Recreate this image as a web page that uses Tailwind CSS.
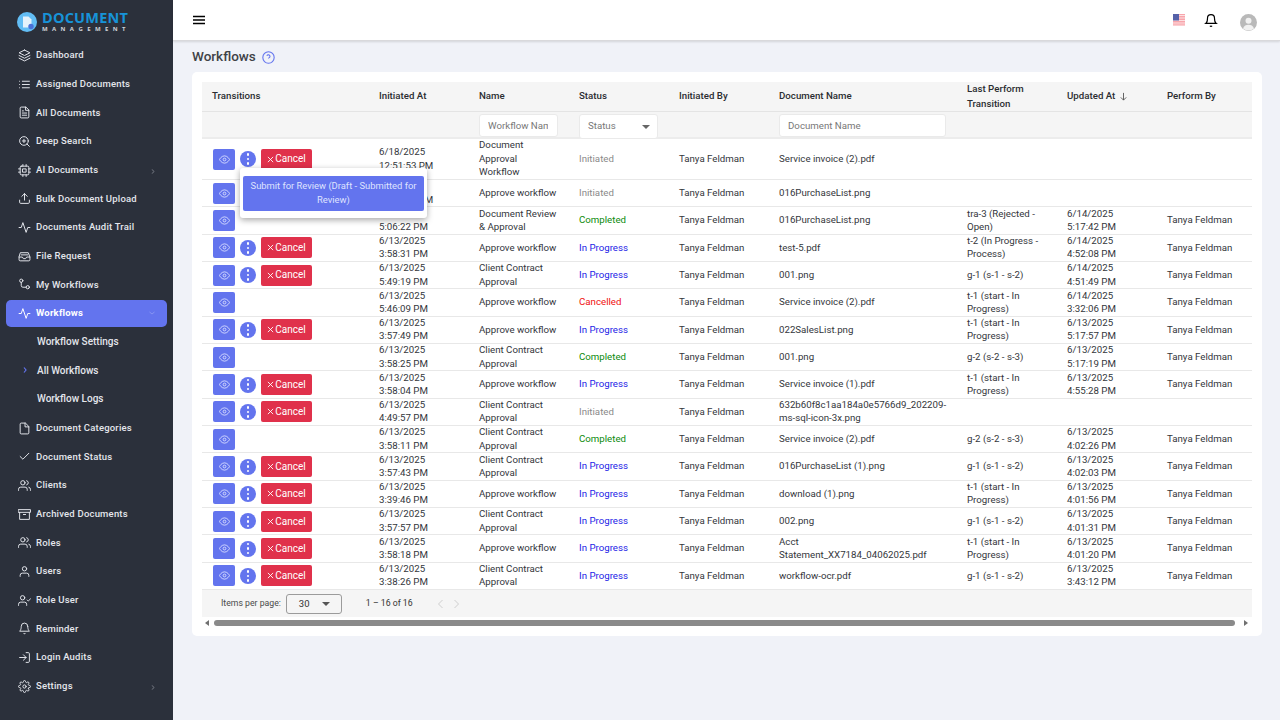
<!DOCTYPE html>
<html lang="en">
<head>
    <meta charset="UTF-8">
    <title>Workflows - Document Management</title>
    <script src="https://cdn.jsdelivr.net/npm/@tailwindcss/browser@4"></script>
</head>
<body class="bg-[#f0f2f8] h-screen overflow-hidden font-['Roboto',sans-serif]">
<div class="flex h-[720px]">
    <!-- Sidebar -->
    <aside class="w-[173px] shrink-0 bg-[#2b303b] text-[#e4e6ec]">
        <div class="flex items-center h-[41px] pl-[17px] pt-[3px]">
            <svg class="w-[20px] h-[20px] shrink-0" viewBox="0 0 20 20"><circle cx="10" cy="10" r="10" fill="#62bdf5"/><path d="M6 4.500h5.500L14.500 7.500V15.500H6z" fill="#e6f2fb"/><circle cx="14" cy="14.500" r="2.700" fill="#4a72d8"/></svg>
            <div class="ml-[5px] leading-none">
                <div class="text-[14.500px] font-bold text-[#1793d8] tracking-[0.2px] leading-[14px] font-['Open_Sans',sans-serif]">DOCUMENT</div>
                <div class="text-[6px] font-bold text-[#cfd2d8] tracking-[4.400px] leading-[8px] font-['Open_Sans',sans-serif]">MANAGEMENT</div>
            </div>
        </div>
        <nav id="nav"></nav>
    </aside>

    <main class="flex-1 min-w-0">
        <header class="h-[41px] bg-white border-b border-[#d9d9dc] shadow-[0_1px_2px_rgba(0,0,0,0.12)] flex items-center pl-[20px] pr-[23px]">
            <svg class="w-[12px] h-[12px] text-black" viewBox="0 0 12 12" fill="none" stroke="currentColor" stroke-width="1.300"><path d="M0 2.500h12M0 6h12M0 9.500h12"/></svg>
            <div class="ml-auto flex items-center">
                <svg class="w-[12px] h-[12px]" viewBox="0 0 12 12"><rect width="12" height="12" fill="#f8a5ab"/><path d="M0 1.500h12M0 4h12M0 6.500h12M0 9h12M0 11.200h12" stroke="#fde0e2" stroke-width="1"/><rect width="6" height="6.500" fill="#5561a8"/></svg>
                <svg class="w-[14px] h-[15px] ml-[19px] text-black" viewBox="0 0 24 24" fill="none" stroke="currentColor" stroke-width="2"><path d="M18 8A6 6 0 0 0 6 8c0 7-3 9-3 9h18s-3-2-3-9"/><path d="M13.730 21a2 2 0 0 1-3.460 0"/></svg>
                <svg class="w-[17px] h-[17px] ml-[22px] mt-[4px]" viewBox="0 0 17 17"><circle cx="8.500" cy="8.500" r="8.500" fill="#b9b9b9"/><circle cx="8.500" cy="6.700" r="3" fill="#f1f1f1"/><path d="M3 14.500c1-3 3-3.800 5.500-3.800s4.500.8 5.500 3.800a8.500 8.500 0 0 1-11 0z" fill="#f1f1f1"/></svg>
            </div>
        </header>

        <div class="pl-[19px] pr-[18px]">
            <div class="h-[31px] flex items-center pt-[1px]">
                <h1 class="text-[13.500px] font-medium text-[#3f4247] leading-none">Workflows</h1>
                <svg class="w-[13px] h-[13px] ml-[6px] mt-[1px] text-[#6374ee]" viewBox="0 0 24 24" fill="none" stroke="currentColor" stroke-width="2"><circle cx="12" cy="12" r="10.500"/><path d="M9 9a3 3 0 0 1 5.800 1c0 2-2.800 2.500-2.800 4"/><path d="M12 17.500h.01"/></svg>
            </div>

            <!-- Card -->
            <section class="relative h-[564px] bg-white rounded-[5px] px-[10px] pt-[10px] text-[9.700px] text-[#33363b]">
                <!-- Header -->
                <div class="grid grid-cols-[167px_100px_100px_100px_100px_188px_100px_100px_95px] items-center h-[30px] bg-[#f5f5f5] border-b border-[#e4e4e4] font-medium text-[#2b2d31] leading-[14.500px] pl-[10px]">
                    <div>Transitions</div><div>Initiated At</div><div>Name</div><div>Status</div><div>Initiated By</div><div>Document Name</div>
                    <div>Last Perform<br>Transition</div>
                    <div class="flex items-center">Updated At<svg class="w-[9px] h-[9px] ml-[4px] text-[#555]" viewBox="0 0 10 10" fill="none" stroke="currentColor" stroke-width="1"><path d="M5 1v8M2 6l3 3 3-3"/></svg></div>
                    <div>Perform By</div>
                </div>
                <!-- Filters -->
                <div class="grid grid-cols-[167px_100px_100px_100px_100px_188px_100px_100px_95px] items-center h-[27px] bg-[#f5f5f5] border-b-2 border-[#ececec] pl-[10px] text-[#777]">
                    <div></div><div></div>
                    <input placeholder="Workflow Name" class="w-[79px] h-[23px] bg-white border border-[#eaeaea] rounded-[3px] pl-[8px] pr-[9px] placeholder:text-[#777] outline-none">
                    <div class="w-[79px] h-[25px] mt-[2px] bg-white border border-[#eaeaea] rounded-[3px] flex items-center justify-between pl-[8px] pr-[7px]">Status<span class="w-0 h-0 border-x-[4px] border-x-transparent border-t-[4px] border-t-[#666]"></span></div>
                    <div></div>
                    <input placeholder="Document Name" class="w-[167px] h-[23px] bg-white border border-[#eaeaea] rounded-[3px] pl-[8px] placeholder:text-[#777] outline-none">
                    <div></div><div></div><div></div>
                </div>
                <!-- Rows -->
                <div id="rows"></div>
                <!-- Paginator -->
                <div class="flex items-center h-[27px] bg-[#f5f5f5] text-[8.700px] text-[#4a4a4a]">
                    <span class="ml-[19px]">Items per page:</span>
                    <div class="ml-[5px] w-[56px] h-[20px] border border-[#9b9b9b] rounded-[3px] flex items-center pl-[12px] pr-[11px] justify-between text-[9.500px] text-[#333]">30<span class="w-0 h-0 border-x-[4px] border-x-transparent border-t-[4px] border-t-[#555]"></span></div>
                    <span class="ml-[24px] text-[#333]">1 – 16 of 16</span>
                    <svg class="w-[7px] h-[10px] ml-[24px] text-[#cfcfcf]" viewBox="0 0 7 10" fill="none" stroke="currentColor" stroke-width="1"><path d="M5.500 1 1.500 5l4 4"/></svg>
                    <svg class="w-[7px] h-[10px] ml-[9px] text-[#cfcfcf]" viewBox="0 0 7 10" fill="none" stroke="currentColor" stroke-width="1"><path d="M1.500 1l4 4-4 4"/></svg>
                </div>
                <!-- Horizontal scrollbar -->
                <div class="flex items-center h-[10px] pt-[1px]">
                    <span class="ml-[3px] w-0 h-0 border-y-[3px] border-y-transparent border-r-[4px] border-r-[#707070]"></span>
                    <div class="ml-[5px] w-[1021px] h-[6px] rounded-full bg-[#8a8a8a]"></div>
                    <span class="ml-[9px] w-0 h-0 border-y-[3px] border-y-transparent border-l-[4px] border-l-[#707070]"></span>
                </div>

                <!-- Open action menu -->
                <div class="absolute left-[48px] top-[96px] w-[187px] h-[50px] bg-white rounded-[3px] shadow-[0_2px_6px_rgba(0,0,0,0.35)] flex items-center justify-center">
                    <button class="w-[181px] h-[35px] bg-[#6374ee] rounded-[2px] text-[9.400px] leading-[14px] text-[#dfe3ff] px-[2px]">Submit for Review (Draft - Submitted for Review)</button>
                </div>
            </section>
        </div>
    </main>
</div>

<script>
// Sidebar
const icons = {
    layers: '<path d="M12 2 2 7l10 5 10-5-10-5z"/><path d="m2 12 10 5 10-5"/><path d="m2 17 10 5 10-5"/>',
    list: '<path d="M8 6h13M8 12h13M8 18h13M3 6h.01M3 12h.01M3 18h.01"/>',
    doc: '<path d="M14 2H6a2 2 0 0 0-2 2v16a2 2 0 0 0 2 2h12a2 2 0 0 0 2-2V8z"/><path d="M14 2v6h6M16 13H8M16 17H8M10 9H8"/>',
    search: '<circle cx="11" cy="11" r="8"/><path d="m21 21-4.350-4.350M11 8v6M8 11h6"/>',
    cpu: '<rect x="4" y="4" width="16" height="16" rx="2"/><rect x="9" y="9" width="6" height="6"/><path d="M9 1v3M15 1v3M9 20v3M15 20v3M20 9h3M20 15h3M1 9h3M1 15h3"/>',
    upload: '<path d="M21 15v4a2 2 0 0 1-2 2H5a2 2 0 0 1-2-2v-4"/><path d="m17 8-5-5-5 5M12 3v12"/>',
    activity: '<path d="M22 12h-4l-3 9L9 3l-3 9H2"/>',
    inbox: '<path d="M22 13h-6l-2 3h-4l-2-3H2"/><path d="M5 5h14l3 8v5a2 2 0 0 1-2 2H4a2 2 0 0 1-2-2v-5z"/><path d="M6 9h12"/>',
    flow: '<circle cx="6" cy="5" r="3"/><circle cx="18" cy="17" r="3"/><path d="M6 8v6a3 3 0 0 0 3 3h6"/>',
    file: '<path d="M13 2H6a2 2 0 0 0-2 2v16a2 2 0 0 0 2 2h12a2 2 0 0 0 2-2V9z"/><path d="M13 2v7h7"/>',
    check: '<path d="M20 6 9 17l-5-5"/>',
    users: '<path d="M17 21v-2a4 4 0 0 0-4-4H5a4 4 0 0 0-4 4v2"/><circle cx="9" cy="7" r="4"/><path d="M23 21v-2a4 4 0 0 0-3-3.870M16 3.130a4 4 0 0 1 0 7.750"/>',
    archive: '<path d="M21 8v13H3V8"/><path d="M1 3h22v5H1zM10 12h4"/>',
    user: '<path d="M20 21v-2a4 4 0 0 0-4-4H8a4 4 0 0 0-4 4v2"/><circle cx="12" cy="7" r="4"/>',
    usercheck: '<path d="M16 21v-2a4 4 0 0 0-4-4H5a4 4 0 0 0-4 4v2"/><circle cx="8.500" cy="7" r="4"/><path d="m17 11 2 2 4-4"/>',
    bell: '<path d="M18 8A6 6 0 0 0 6 8c0 7-3 9-3 9h18s-3-2-3-9"/><path d="M13.730 21a2 2 0 0 1-3.460 0"/>',
    login: '<path d="M15 3h4a2 2 0 0 1 2 2v14a2 2 0 0 1-2 2h-4"/><path d="m10 17 5-5-5-5M15 12H3"/>',
    gear: '<circle cx="12" cy="12" r="3"/><path d="M19.400 15a1.650 1.650 0 0 0 .33 1.820l.06.06a2 2 0 1 1-2.830 2.830l-.06-.06a1.650 1.650 0 0 0-2.820 1.170V21a2 2 0 1 1-4 0v-.09a1.650 1.650 0 0 0-2.820-1.170l-.06.06a2 2 0 1 1-2.830-2.830l.06-.06A1.650 1.650 0 0 0 3.090 14H3a2 2 0 1 1 0-4h.09a1.650 1.650 0 0 0 1.170-2.820l-.06-.06a2 2 0 1 1 2.830-2.830l.06.06A1.650 1.650 0 0 0 10 3.090V3a2 2 0 1 1 4 0v.09a1.650 1.650 0 0 0 2.820 1.170l.06-.06a2 2 0 1 1 2.830 2.830l-.06.06A1.650 1.650 0 0 0 20.910 10H21a2 2 0 1 1 0 4h-.09a1.650 1.650 0 0 0-1.510 1z"/>'
};
const menu = [
    ['layers', 'Dashboard'], ['list', 'Assigned Documents'], ['doc', 'All Documents'], ['search', 'Deep Search'],
    ['cpu', 'AI Documents', 'more'], ['upload', 'Bulk Document Upload'], ['activity', 'Documents Audit Trail'],
    ['inbox', 'File Request'], ['flow', 'My Workflows'], ['activity', 'Workflows', 'active'],
    [null, 'Workflow Settings'], [null, 'All Workflows', 'current'], [null, 'Workflow Logs'],
    ['file', 'Document Categories'], ['check', 'Document Status'], ['users', 'Clients'], ['archive', 'Archived Documents'],
    ['users', 'Roles'], ['user', 'Users'], ['usercheck', 'Role User'], ['bell', 'Reminder'], ['login', 'Login Audits'],
    ['gear', 'Settings', 'more']
];
document.getElementById('nav').innerHTML = menu.map(([icon, label, flag]) => {
    if (!icon) {
        const arrow = flag === 'current' ? '<svg class="absolute left-[23px] top-[11px] w-[4px] h-[6px] text-[#6374ee]" viewBox="0 0 4 6" fill="none" stroke="currentColor" stroke-width="1.200"><path d="m1 .5 2 2.500-2 2.500"/></svg>' : '';
        return `<a class="relative flex items-center h-[28.680px] pb-[1px] pl-[37px] text-[10px] font-medium text-[#e4e6ec]">${arrow}${label}</a>`;
    }
    const active = flag === 'active';
    const svg = `<svg class="w-[13px] h-[13px] shrink-0" viewBox="0 0 24 24" fill="none" stroke="currentColor" stroke-width="1.800" stroke-linecap="round" stroke-linejoin="round">${icons[icon]}</svg>`;
    const chev = flag === 'more' ? '<svg class="ml-auto mr-[12px] mt-[3px] w-[4px] h-[5px] text-[#8a8e98]" viewBox="0 0 4 6" fill="none" stroke="currentColor" stroke-width="1"><path d="m1 .5 2 2.500-2 2.500"/></svg>' : '';
    const down = active ? '<svg class="ml-auto mr-[12px] w-[6px] h-[4px] text-[#8794f2]" viewBox="0 0 6 4" fill="none" stroke="currentColor" stroke-width="1"><path d="m.5 1 2.500 2 2.500-2"/></svg>' : '';
    const inner = `${svg}<span class="ml-[5px]">${label}</span>${chev}${down}`;
    return active
        ? `<div class="flex items-center h-[28.680px]"><a class="flex items-center w-[161px] h-[27px] ml-[6px] pl-[12px] bg-[#6374ee] rounded-[5px] text-[9.500px] font-bold tracking-[0.2px] text-white">${inner}</a></div>`
        : `<a class="flex items-center h-[28.680px] ml-[6px] pl-[12px] w-[161px] text-[9.500px] font-medium tracking-[0.2px]">${inner}</a>`;
}).join('');

// Table
const eye = '<button class="w-[22px] h-[21px] bg-[#6374ee] rounded-[2px] flex items-center justify-center shrink-0"><svg class="w-[11px] h-[11px] text-[#d7dcff]" viewBox="0 0 24 24" fill="none" stroke="currentColor" stroke-width="2"><path d="M1 12s4-8 11-8 11 8 11 8-4 8-11 8-11-8-11-8z"/><circle cx="12" cy="12" r="3"/></svg></button>';
const actions = eye + '<button class="ml-[5px] w-[16px] h-[16px] rounded-full bg-[#6374ee] flex flex-col items-center justify-center gap-[2px] shrink-0"><i class="w-[2.500px] h-[2.500px] rounded-full bg-white"></i><i class="w-[2.500px] h-[2.500px] rounded-full bg-white"></i><i class="w-[2.500px] h-[2.500px] rounded-full bg-white"></i></button><button class="ml-[5px] w-[51px] h-[21px] bg-[#e0314b] rounded-[2px] flex items-center justify-center text-white text-[10px] shrink-0"><svg class="w-[7px] h-[7px] mr-[1px]" viewBox="0 0 8 8" fill="none" stroke="currentColor" stroke-width="1"><path d="m1 1 6 6M7 1 1 7"/></svg>Cancel</button>';
const statusClass = {
    'Initiated': 'text-[#8a8a8a]',
    'Completed': 'text-[#0c8a0c]',
    'In Progress': 'text-[#1c1ce6]',
    'Cancelled': 'text-[#f01010]'
};
const CCA = 'Client Contract Approval', AW = 'Approve workflow', IP = 'In Progress', T1 = 't-1 (start - In Progress)', G1 = 'g-1 (s-1 - s-2)', G2 = 'g-2 (s-2 - s-3)';
const rows = [
    [1, '6/18/2025', '12:51:53 PM', 'Document<br>Approval<br>Workflow', 'Initiated', 'Service invoice (2).pdf', '', '', ''],
    [1, '6/18/2025', '12:49:31 PM', AW, 'Initiated', '016PurchaseList.png', '', '', ''],
    [0, '6/13/2025', '5:06:22 PM', 'Document Review<br>&amp; Approval', 'Completed', '016PurchaseList.png', 'tra-3 (Rejected - Open)', '6/14/2025', '5:17:42 PM'],
    [1, '6/13/2025', '3:58:31 PM', AW, IP, 'test-5.pdf', 't-2 (In Progress - Process)', '6/14/2025', '4:52:08 PM'],
    [1, '6/13/2025', '5:49:19 PM', CCA, IP, '001.png', G1, '6/14/2025', '4:51:49 PM'],
    [0, '6/13/2025', '5:46:09 PM', AW, 'Cancelled', 'Service invoice (2).pdf', T1, '6/14/2025', '3:32:06 PM'],
    [1, '6/13/2025', '3:57:49 PM', AW, IP, '022SalesList.png', T1, '6/13/2025', '5:17:57 PM'],
    [0, '6/13/2025', '3:58:25 PM', CCA, 'Completed', '001.png', G2, '6/13/2025', '5:17:19 PM'],
    [1, '6/13/2025', '3:58:04 PM', AW, IP, 'Service invoice (1).pdf', T1, '6/13/2025', '4:55:28 PM'],
    [1, '6/13/2025', '4:49:57 PM', CCA, 'Initiated', '632b60f8c1aa184a0e5766d9_202209-ms-sql-icon-3x.png', '', '', ''],
    [0, '6/13/2025', '3:58:11 PM', CCA, 'Completed', 'Service invoice (2).pdf', G2, '6/13/2025', '4:02:26 PM'],
    [1, '6/13/2025', '3:57:43 PM', CCA, IP, '016PurchaseList (1).png', G1, '6/13/2025', '4:02:03 PM'],
    [1, '6/13/2025', '3:39:46 PM', AW, IP, 'download (1).png', T1, '6/13/2025', '4:01:56 PM'],
    [1, '6/13/2025', '3:57:57 PM', CCA, IP, '002.png', G1, '6/13/2025', '4:01:31 PM'],
    [1, '6/13/2025', '3:58:18 PM', AW, IP, 'Acct Statement_XX7184_04062025.pdf', T1, '6/13/2025', '4:01:20 PM'],
    [1, '6/13/2025', '3:38:26 PM', CCA, IP, 'workflow-ocr.pdf', G1, '6/13/2025', '3:43:12 PM']
];
document.getElementById('rows').innerHTML = rows.map((r, i) => `
    <div class="grid grid-cols-[167px_100px_100px_100px_100px_188px_100px_100px_95px] items-center pl-[10px] leading-[13.500px] border-b border-[#e8e8e8] [&>div+div]:-mt-[1px] ${i === 0 ? 'h-[41px]' : 'h-[27.350px]'}">
        <div class="flex items-center pl-[1px]">${r[0] ? actions : eye}</div>
        <div>${r[1]}<br>${r[2]}</div>
        <div class="pr-[16px]">${r[3]}</div>
        <div class="${statusClass[r[4]]}">${r[4]}</div>
        <div>Tanya Feldman</div>
        <div class="pr-[21px]">${r[5]}</div>
        <div class="pr-[20px]">${r[6]}</div>
        <div>${r[7]}<br>${r[8]}</div>
        <div>${r[6] ? 'Tanya Feldman' : ''}</div>
    </div>`).join('');
</script>
</body>
</html>
